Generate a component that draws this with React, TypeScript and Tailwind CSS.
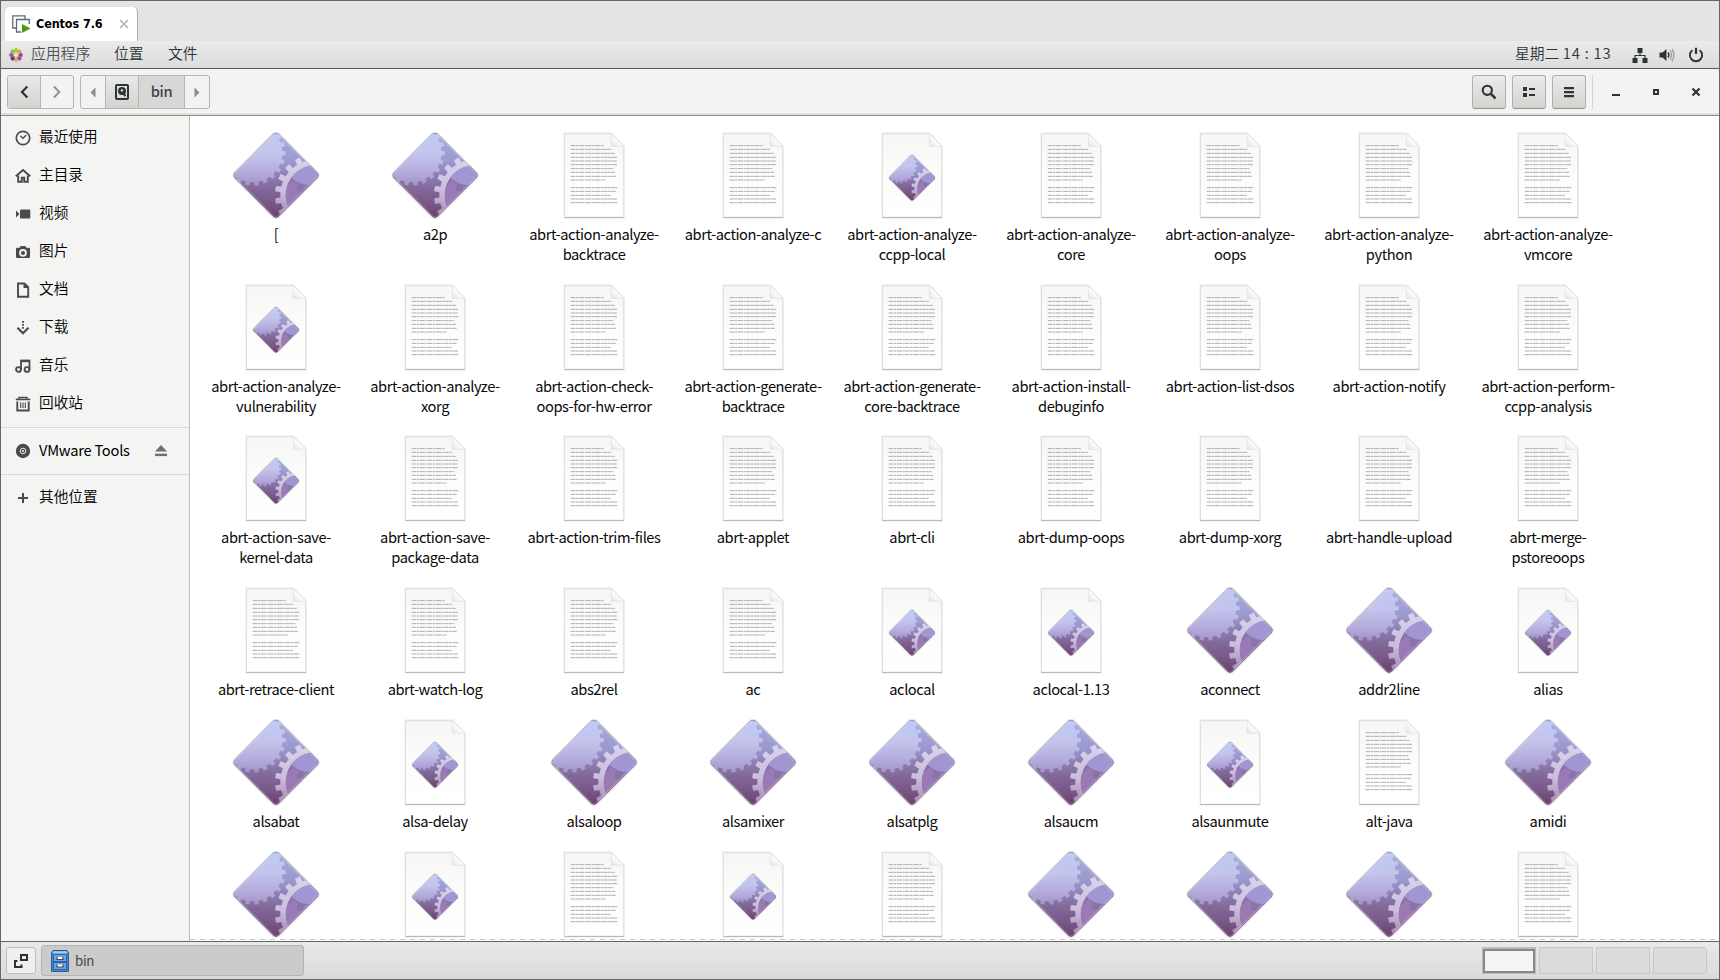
import React from "react";

type Kind = "bin" | "doc" | "script";

interface Entry {
  kind: Kind;
  lines: string[];
}

const e = (kind: Kind, ...lines: string[]): Entry => ({ kind, lines });

const rows: Entry[][] = [
  [
    e("bin", "["),
    e("bin", "a2p"),
    e("doc", "abrt-action-analyze-", "backtrace"),
    e("doc", "abrt-action-analyze-c"),
    e("script", "abrt-action-analyze-", "ccpp-local"),
    e("doc", "abrt-action-analyze-", "core"),
    e("doc", "abrt-action-analyze-", "oops"),
    e("doc", "abrt-action-analyze-", "python"),
    e("doc", "abrt-action-analyze-", "vmcore"),
  ],
  [
    e("script", "abrt-action-analyze-", "vulnerability"),
    e("doc", "abrt-action-analyze-", "xorg"),
    e("doc", "abrt-action-check-", "oops-for-hw-error"),
    e("doc", "abrt-action-generate-", "backtrace"),
    e("doc", "abrt-action-generate-", "core-backtrace"),
    e("doc", "abrt-action-install-", "debuginfo"),
    e("doc", "abrt-action-list-dsos"),
    e("doc", "abrt-action-notify"),
    e("doc", "abrt-action-perform-", "ccpp-analysis"),
  ],
  [
    e("script", "abrt-action-save-", "kernel-data"),
    e("doc", "abrt-action-save-", "package-data"),
    e("doc", "abrt-action-trim-files"),
    e("doc", "abrt-applet"),
    e("doc", "abrt-cli"),
    e("doc", "abrt-dump-oops"),
    e("doc", "abrt-dump-xorg"),
    e("doc", "abrt-handle-upload"),
    e("doc", "abrt-merge-", "pstoreoops"),
  ],
  [
    e("doc", "abrt-retrace-client"),
    e("doc", "abrt-watch-log"),
    e("doc", "abs2rel"),
    e("doc", "ac"),
    e("script", "aclocal"),
    e("script", "aclocal-1.13"),
    e("bin", "aconnect"),
    e("bin", "addr2line"),
    e("script", "alias"),
  ],
  [
    e("bin", "alsabat"),
    e("script", "alsa-delay"),
    e("bin", "alsaloop"),
    e("bin", "alsamixer"),
    e("bin", "alsatplg"),
    e("bin", "alsaucm"),
    e("script", "alsaunmute"),
    e("doc", "alt-java"),
    e("bin", "amidi"),
  ],
  [
    e("bin"),
    e("script"),
    e("doc"),
    e("script"),
    e("doc"),
    e("bin"),
    e("bin"),
    e("bin"),
    e("doc"),
  ],
];

/** Outline of a cog: alternating arcs of the body radius and the tooth radius. */
function cog(cx: number, cy: number, body: number, tip: number, teeth: number, phase: number): string {
  const step = (Math.PI * 2) / teeth;
  const at = (r: number, a: number) => `${(cx + r * Math.cos(a)).toFixed(1)} ${(cy + r * Math.sin(a)).toFixed(1)}`;
  let d = "";
  for (let i = 0; i < teeth; i++) {
    const a = phase + i * step;
    d += `${i === 0 ? "M" : "L"}${at(body, a - step * 0.27)}L${at(tip, a - step * 0.21)}`;
    d += `A${tip} ${tip} 0 0 1 ${at(tip, a + step * 0.21)}L${at(body, a + step * 0.27)}`;
    d += `A${body} ${body} 0 0 1 ${at(body, a + step * 0.73)}`;
  }
  return d + "Z";
}

const circle = (cx: number, cy: number, r: number) =>
  `M${cx - r} ${cy}a${r} ${r} 0 1 0 ${2 * r} 0a${r} ${r} 0 1 0 ${-2 * r} 0Z`;

const bigCog = cog(98, 98, 89, 99, 22, 0.02);
const ringCog = cog(287, 225, 106, 122, 20, Math.PI + 0.16) + circle(287, 225, 90);
const backCog = cog(265, 128, 70, 90, 12, 0.3);
const diamond = "M160 41.5Q168 35 176 41.5L292 158Q299 166 292 174L176 290.500Q168 297 160 290.5L44 174Q37 166 44 158Z";

const textLines: [number, number][] = [
  [77, 162], [88, 185], [100, 194], [112, 203], [123, 200], [134, 203], [146, 190], [157, 195],
  [169, 197], [180, 167], [203, 204], [214, 197], [226, 182], [237, 201], [248, 204],
];

function SharedDefs() {
  return (
    <svg className="absolute h-0 w-0" aria-hidden="true">
      <defs>
        <linearGradient id="base" x1="0" y1="0" x2="0" y2="1">
          <stop offset="0" stopColor="#a9afdf" />
          <stop offset="0.35" stopColor="#9a97cd" />
          <stop offset="0.5" stopColor="#8c80b3" />
          <stop offset="0.65" stopColor="#82699a" />
          <stop offset="0.85" stopColor="#775584" />
          <stop offset="1" stopColor="#6c3f6b" />
        </linearGradient>
        <linearGradient id="bigcog" gradientUnits="userSpaceOnUse" x1="0" y1="38" x2="0" y2="200">
          <stop offset="0" stopColor="#bfcbf5" />
          <stop offset="0.4" stopColor="#c3c4ed" />
          <stop offset="0.75" stopColor="#b4aadb" />
          <stop offset="1" stopColor="#a192c4" />
        </linearGradient>
        <linearGradient id="ring" gradientUnits="userSpaceOnUse" x1="0" y1="110" x2="0" y2="290">
          <stop offset="0" stopColor="#d9d5ee" />
          <stop offset="0.6" stopColor="#c9bbdc" />
          <stop offset="1" stopColor="#a383ae" />
        </linearGradient>
        <linearGradient id="paper" x1="0" y1="0" x2="0" y2="1">
          <stop offset="0" stopColor="#f6f6f4" />
          <stop offset="0.5" stopColor="#fcfcfb" />
          <stop offset="1" stopColor="#ffffff" />
        </linearGradient>
        <linearGradient id="fold" x1="0" y1="1" x2="1" y2="0">
          <stop offset="0" stopColor="#e4e4e4" />
          <stop offset="0.5" stopColor="#ffffff" />
          <stop offset="1" stopColor="#ffffff" />
        </linearGradient>
        <clipPath id="diamondClip">
          <path d={diamond} />
        </clipPath>
        <clipPath id="ringInside">
          <circle cx="287" cy="225" r="90" />
        </clipPath>
        <g id="cogs">
          <path d={diamond} fill="none" stroke="#000" strokeOpacity="0.1" strokeWidth="7" />
          <g clipPath="url(#diamondClip)">
            <path d={diamond} fill="url(#base)" />
            <path d={bigCog} fill="url(#bigcog)" />
            <g clipPath="url(#ringInside)">
              <rect x="190" y="130" width="110" height="160" fill="#9a79b4" />
              <path d={backCog} fill="#8775aa" />
              <circle cx="265" cy="128" r="67" fill="#a195d2" />
            </g>
            <path d={ringCog} fillRule="evenodd" fill="url(#ring)" />
            <path d={diamond} fill="none" stroke="#fff" strokeOpacity="0.2" strokeWidth="9" />
            <path d={diamond} fill="none" stroke="#4b3a6b" strokeOpacity="0.5" strokeWidth="3" />
          </g>
        </g>
        <g id="sheet">
          <path d="M43 40H184L222 79V293H43Z" fill="none" stroke="#000" strokeOpacity="0.06" strokeWidth="6" />
          <path d="M43.500 41H184L221 79V291.500H43.500Z" fill="url(#paper)" stroke="#dadada" strokeWidth="2.500" />
          <path d="M43 292.500H222" stroke="#b9b9b9" strokeWidth="3" />
          <path d="M184 41V79H221Z" fill="url(#fold)" stroke="#dfdfdf" strokeWidth="2" />
        </g>
        <g id="lines">
          {textLines.map(([y, x]) => (
            <path key={y} d={`M62 ${y}H${x}`} stroke="#adadad" strokeWidth="3" strokeDasharray="13 1.500 8 1.500 17 2 5 1" />
          ))}
        </g>
      </defs>
    </svg>
  );
}

function FileIcon({ kind }: { kind: Kind }) {
  if (kind === "bin") {
    return (
      <svg className="h-[88px] w-[88px] shrink-0" viewBox="36 36 264 264">
        <use href="#cogs" />
      </svg>
    );
  }
  return (
    <svg className="h-[88px] w-[88px] shrink-0" viewBox="0 36 264 264">
      <use href="#sheet" />
      {kind === "doc" ? <use href="#lines" /> : <use href="#cogs" transform="translate(132 173.500) scale(0.54) translate(-168 -166)" />}
    </svg>
  );
}

const ink = "#4a4a48";

const placeIcons: Record<string, React.ReactNode> = {
  recent: (
    <g fill="none" stroke={ink}>
      <circle cx="8" cy="8" r="6.700" strokeWidth="1.700" />
      <path d="M5.300 5.800L8 8.300L11.300 5" strokeWidth="1.300" />
    </g>
  ),
  home: (
    <g>
      <path d="M0.800 8.200L8 2L15.200 8.200" fill="none" stroke={ink} strokeWidth="1.900" />
      <path d="M3.200 7.500V13.700H6.800V9.800H9.200V13.700H12.800V7.500" fill="none" stroke={ink} strokeWidth="1.900" />
    </g>
  ),
  video: (
    <g fill={ink}>
      <rect x="5" y="3.500" width="10.300" height="9" rx="1.300" />
      <path d="M1 4.500L4.500 8L1 11.500Z" />
    </g>
  ),
  camera: (
    <g>
      <path fill={ink} fillRule="evenodd" d="M2.300 3.800H4.700L5.700 2H10.300L11.300 3.800H13.700Q15 3.800 15 5V12.800Q15 14 13.700 14H2.300Q1 14 1 12.800V5Q1 3.800 2.300 3.800ZM8 5A3.900 3.900 0 1 0 8 12.800A3.900 3.900 0 1 0 8 5Z" />
      <circle cx="8" cy="8.900" r="2" fill={ink} />
    </g>
  ),
  document: (
    <g>
      <path d="M3 1.500H9.500L13.200 5.200V14.700H3Z" fill="none" stroke={ink} strokeWidth="1.900" />
      <path d="M8.500 1.500V6H13.500Z" fill={ink} />
    </g>
  ),
  download: (
    <g fill="none" stroke={ink}>
      <path d="M8 1V9" strokeWidth="1.900" strokeDasharray="1.700 1.300" />
      <path d="M2.500 7.800L8 13.200L13.500 7.800" strokeWidth="2.200" />
    </g>
  ),
  music: (
    <g fill="none" stroke={ink}>
      <circle cx="3.500" cy="11.500" r="2.400" strokeWidth="1.900" />
      <circle cx="12" cy="11.500" r="2.400" strokeWidth="1.900" />
      <path d="M6 11.500V2.700H14.500V11.500" strokeWidth="1.800" />
      <path d="M6 3H14.500" strokeWidth="2.400" />
    </g>
  ),
  trash: (
    <g fill="none" stroke={ink}>
      <path d="M0.800 3.400H15.200" strokeWidth="1.700" />
      <path d="M4 3V1.300H12V3" strokeWidth="1.300" />
      <path d="M2.300 5.500V14.500H13.700V5.500" strokeWidth="1.900" />
      <path d="M5.700 6.500V12M8 6.500V12M10.300 6.500V12" strokeWidth="1.100" />
    </g>
  ),
  disc: (
    <g>
      <circle cx="8" cy="8" r="7.200" fill={ink} />
      <circle cx="8" cy="8" r="2.800" fill="none" stroke="#e8e8e6" strokeWidth="1" />
      <circle cx="8" cy="8" r="1.100" fill="#e8e8e6" />
    </g>
  ),
  plus: <path d="M8 3V13M3 8H13" stroke={ink} strokeWidth="2" />,
};

function Place({ icon, label, eject }: { icon: string; label: string; eject?: boolean }) {
  return (
    <div className="flex h-[38px] items-center pl-[14px] text-[14.67px] leading-5 text-black">
      <svg className="h-4 w-4 shrink-0" viewBox="0 0 16 16">
        {placeIcons[icon]}
      </svg>
      {eject ? (
        <span className="-mt-[3px] ml-2 tracking-[-0.24px] whitespace-nowrap">{label}</span>
      ) : (
        <span className="-mt-1 ml-2 font-[350] whitespace-nowrap">{label}</span>
      )}
      {eject && (
        <svg className="mr-[20px] ml-auto h-4 w-4 shrink-0" viewBox="0 0 16 16" fill="#6c716f">
          <path d="M8 2L14 8.500H2Z" />
          <rect x="2" y="10.700" width="12" height="2.400" />
        </svg>
      )}
    </div>
  );
}

function ToolButton({ children }: { children: React.ReactNode }) {
  return (
    <div className="flex h-[34px] w-[34px] items-center justify-center rounded-[3px] border border-[#b0b0ac] border-b-[#8f8f8b] bg-linear-to-b from-[#ebebe9] to-[#d3d3d0]">
      <svg className="h-4 w-4" viewBox="0 0 16 16">
        {children}
      </svg>
    </div>
  );
}

function TabStrip() {
  return (
    <div className="flex h-[40px] shrink-0 items-end bg-[#e3e4e6] pl-1">
      <div className="flex h-[34px] w-[133px] items-center rounded-t-[5px] border-r border-[#aeaeae] bg-white pl-[7px]">
        <svg className="h-[19px] w-[19px] shrink-0" viewBox="0 0 19 19">
          <path d="M4 13H0.800V0.800H13V4" fill="none" stroke="#5d6b78" strokeWidth="1.300" />
          <path d="M9 17H4.500V4.500H17.300V9" fill="none" stroke="#5d6b78" strokeWidth="1.300" />
          <path d="M10 9L18.500 13.500L10 18Z" fill="#4a9a12" />
        </svg>
        <span className="ml-[5px] w-[70px] pt-px font-['DejaVu_Sans_Condensed','DejaVu_Sans',sans-serif] text-[12.5px] font-bold tracking-[-0.1px] whitespace-nowrap text-black [font-stretch:condensed]">
          Centos 7.6
        </span>
        <svg className="ml-[13px] h-[10px] w-[10px]" viewBox="0 0 10 10">
          <path d="M1 1L9 9M9 1L1 9" stroke="#bfbfbf" strokeWidth="1.800" />
        </svg>
      </div>
    </div>
  );
}

const petals = ["#9ccf2a", "#e8a23a", "#a83c98", "#7a55a8", "#efa724", "#3d3d8f", "#b04b9c", "#8fbf3a"];

function MenuBar() {
  return (
    <div className="flex h-[28px] shrink-0 items-center border-b border-[#595959] bg-linear-to-b from-[#ebebeb] to-[#dcdcdc] pl-[8px] text-[14.8px] leading-5 font-[350] text-[#2e3436]">
      <svg className="h-[14px] w-[14px]" viewBox="-7 -7 14 14">
        {petals.map((c, i) => (
          <path key={i} d="M0 -1.800L2.200 -4.500L1.300 -6.700H-1.300L-2.200 -4.500Z" fill={c} transform={`rotate(${i * 45})`} />
        ))}
      </svg>
      <span className="-mt-[3px] ml-[8px] w-[61px] whitespace-nowrap text-[#4a5254]">应用程序</span>
      <span className="-mt-[3px] ml-[22px] w-[30px]">位置</span>
      <span className="-mt-[3px] ml-[24px]">文件</span>
      <span className="-mt-[3px] ml-auto w-[97px] whitespace-pre">
        星期二 <span className="tracking-[0.8px]">14 : 13</span>
      </span>
      <svg className="ml-[20px] h-4 w-4" viewBox="0 0 16 16" fill="#2e3436">
        <path d="M5.500 1H10.500V6H5.500ZM0.500 11H5.500V16H0.500ZM10.500 11H15.500V16H10.500Z" />
        <path d="M8 6V8.500M3 11V8.500H13V11" fill="none" stroke="#2e3436" strokeWidth="1.200" />
      </svg>
      <svg className="ml-[11px] h-4 w-4" viewBox="0 0 16 16">
        <path d="M0.500 5.500H3.500L7.500 2V14L3.500 10.500H0.500Z" fill="#2e3436" />
        <path d="M9 5.500Q10.800 8 9 10.500" fill="none" stroke="#2e3436" strokeWidth="1.400" />
        <path d="M11 3.500Q14 8 11 12.500M13 2Q17 8 13 14" fill="none" stroke="#a0a2a2" strokeWidth="1.400" />
      </svg>
      <svg className="mr-[15px] ml-[13px] h-4 w-4" viewBox="0 0 16 16" fill="none" stroke="#2e3436" strokeWidth="1.900">
        <path d="M4.500 3.200A6.100 6.100 0 1 0 11.500 3.200" />
        <path d="M8 0.800V7" strokeWidth="2.200" />
      </svg>
    </div>
  );
}

function Toolbar() {
  return (
    <div className="flex h-[47px] shrink-0 items-start border-b border-[#8b8b88] bg-[#f3f3f3] pt-[6px] pl-[6px] shadow-[inset_0_-2px_0_#e0e0dd]">
      <div className="flex h-[34px] w-[67px] overflow-hidden rounded-[3px] border border-[#b5b5b1]">
        <div className="flex w-[33px] items-center justify-center border-r border-[#b5b5b1] bg-linear-to-b from-[#e9e9e7] to-[#d3d3d0]">
          <svg className="h-4 w-4" viewBox="0 0 16 16">
            <path d="M11.300 2.500L6 8L11.300 13.500" fill="none" stroke="#2e3436" strokeWidth="2.200" />
          </svg>
        </div>
        <div className="flex flex-1 items-center justify-center">
          <svg className="h-4 w-4" viewBox="0 0 16 16">
            <path d="M5 2.500L10.300 8L5 13.500" fill="none" stroke="#929595" strokeWidth="2" />
          </svg>
        </div>
      </div>
      <div className="ml-[6px] flex h-[34px] w-[130px] overflow-hidden rounded-[3px] border border-[#b5b5b1]">
        <div className="flex w-[25px] items-center justify-center border-r border-[#b5b5b1]">
          <svg className="h-[11px] w-[6px]" viewBox="0 0 6 11">
            <path d="M5.500 0.500V10.500L0.500 5.500Z" fill="#8b8e8f" />
          </svg>
        </div>
        <div className="flex w-[33px] items-center justify-center border-r border-[#b5b5b1] bg-linear-to-b from-[#e9e9e7] to-[#d3d3d0]">
          <svg className="h-4 w-4" viewBox="0 0 16 16">
            <rect x="2" y="1" width="12" height="14" rx="1" fill="none" stroke="#2e3436" strokeWidth="2" />
            <circle cx="8" cy="7" r="4" fill="#2e3436" />
            <circle cx="8" cy="6.500" r="1.300" fill="#dcdcda" />
            <path d="M8 8L11.500 12" stroke="#2e3436" strokeWidth="2" />
          </svg>
        </div>
        <div className="flex w-[46px] items-center justify-center border-r border-[#b5b5b1] bg-[#d7d7d5] pb-[2px] text-[14.67px] font-medium tracking-[-0.3px] text-[#3e4547]">
          bin
        </div>
        <div className="flex flex-1 items-center justify-center">
          <svg className="h-[11px] w-[6px]" viewBox="0 0 6 11">
            <path d="M0.500 0.500V10.500L5.500 5.500Z" fill="#8b8e8f" />
          </svg>
        </div>
      </div>
      <div className="mr-[15px] ml-auto flex items-start">
        <div className="flex gap-[6px]">
          <ToolButton>
            <circle cx="6.300" cy="6.300" r="4.600" fill="none" stroke="#2e3436" strokeWidth="2.100" />
            <path d="M9.700 9.700L14.500 14.500" stroke="#2e3436" strokeWidth="2.500" />
          </ToolButton>
          <ToolButton>
            <path fill="#2e3436" d="M2 3H6V7H2ZM2 9H6V13H2ZM8 4H14V6H8ZM8 10H14V12H8Z" />
          </ToolButton>
          <ToolButton>
            <path fill="#2e3436" d="M3 3H13V5.200H3ZM3 7H13V9.200H3ZM3 11H13V13.200H3Z" />
          </ToolButton>
        </div>
        <div className="ml-[6px] h-[34px] w-px bg-[#d3d3d0]" />
        <div className="ml-[15px] flex h-[34px] items-center gap-6 text-[#2e3436]">
          <svg className="h-4 w-4" viewBox="0 0 16 16">
            <path d="M4 10H12V12H4Z" fill="#2e3436" />
          </svg>
          <svg className="h-4 w-4" viewBox="0 0 16 16">
            <rect x="6" y="6" width="4" height="4" fill="none" stroke="#2e3436" strokeWidth="2" />
          </svg>
          <svg className="h-4 w-4" viewBox="0 0 16 16">
            <path d="M4.500 4.500L11.500 11.500M11.500 4.500L4.500 11.500" stroke="#2e3436" strokeWidth="2.200" />
          </svg>
        </div>
      </div>
    </div>
  );
}

function Sidebar() {
  return (
    <div className="w-[189px] shrink-0 border-r border-[#bcbcb9] bg-[#f4f4f2] pt-[3px]">
      <Place icon="recent" label="最近使用" />
      <Place icon="home" label="主目录" />
      <Place icon="video" label="视频" />
      <Place icon="camera" label="图片" />
      <Place icon="document" label="文档" />
      <Place icon="download" label="下载" />
      <Place icon="music" label="音乐" />
      <Place icon="trash" label="回收站" />
      <div className="my-[4px] h-px bg-[#d8d8d6]" />
      <Place icon="disc" label="VMware Tools" eject />
      <div className="my-[4px] h-px bg-[#d8d8d6]" />
      <Place icon="plus" label="其他位置" />
    </div>
  );
}

function FileGrid() {
  return (
    <div className="flex min-w-0 flex-1 flex-col bg-white">
      <div className="min-h-0 flex-1 overflow-hidden pt-4 pl-[6.5px]">
        {rows.map((row, r) => (
          <div key={r} className="mb-[20px] grid grid-cols-[repeat(9,159px)] nth-2:mb-[19px]">
            {row.map((entry, c) => (
              <div key={c} className="flex flex-col items-center gap-1">
                <FileIcon kind={entry.kind} />
                <div className="min-h-5 text-center text-[14.67px] leading-5 tracking-[-0.44px] whitespace-nowrap text-[#0a0a0a]">
                  {entry.lines.map((line) => (
                    <div key={line}>{line}</div>
                  ))}
                </div>
              </div>
            ))}
          </div>
        ))}
      </div>
      <div className="h-px shrink-0 bg-[repeating-linear-gradient(90deg,#c4c4c2_0_5px,#fff_5px_10px)]" />
      <div className="h-px shrink-0" />
    </div>
  );
}

function TaskBar() {
  return (
    <div className="flex h-[38px] shrink-0 items-start border-t border-[#666] bg-linear-to-b from-[#e9e9e9] to-[#dadada] pl-[5px]">
      <div className="mt-[5px] flex h-[27px] w-[30px] items-center justify-center rounded-[3px] border border-[#bdbdbb] bg-[#efefef]">
        <svg className="h-4 w-4" viewBox="0 0 16 16" fill="none" stroke="#2e3436" strokeWidth="2">
          <rect x="8" y="2" width="6" height="5" />
          <path d="M4.500 8H2V14H8.500V11.500" />
        </svg>
      </div>
      <div className="mt-[3px] ml-[5px] flex h-[31px] w-[263px] items-center rounded-[3px] border border-[#b5b5b3] bg-[#cbcbcb] pl-[9px]">
        <svg className="h-[22px] w-[18px]" viewBox="0 0 18 22">
          <path d="M2 0.500H16L17.500 3V21.500H0.500V3Z" fill="#4f8ad0" stroke="#245a9c" />
          <path d="M2.500 1.200H15.500L16.500 3.500H1.500Z" fill="#a8cdf0" />
          <rect x="2.500" y="4.500" width="13" height="7" fill="#6ba2e0" stroke="#2b63a8" />
          <rect x="2.500" y="12.500" width="13" height="7" fill="#6ba2e0" stroke="#2b63a8" />
          <path d="M6 7V9.500H12V7M6 14.500V17H12V14.500" fill="#fff" stroke="#4e4a38" strokeWidth="1.200" />
        </svg>
        <span className="ml-[6px] text-[13.3px] leading-5 tracking-[-0.3px] text-[#42484a]">bin</span>
      </div>
      <div className="mt-[5px] mr-[12px] ml-auto flex h-[27px] gap-[3px]">
        <div className="w-[54px] border border-[#bdbdbb] bg-[#bdbdbb] pt-px">
          <div className="h-[24px] w-[52px] border-2 border-[#888886] bg-[#f5f5f3]" />
        </div>
        <div className="w-[54px] border border-[#c8c8c8] bg-[#dcdcdc]" />
        <div className="w-[54px] border border-[#c8c8c8] bg-[#dcdcdc]" />
        <div className="w-[54px] rounded-r-[4px] border border-[#c8c8c8] bg-[#dcdcdc]" />
      </div>
    </div>
  );
}

export default function App() {
  return (
    <div className="flex h-[980px] w-[1720px] flex-col overflow-hidden border border-[#666] font-['Noto_Sans_CJK_SC','Noto_Sans',sans-serif]">
      <SharedDefs />
      <TabStrip />
      <MenuBar />
      <Toolbar />
      <div className="flex min-h-0 flex-1">
        <Sidebar />
        <FileGrid />
      </div>
      <TaskBar />
    </div>
  );
}
